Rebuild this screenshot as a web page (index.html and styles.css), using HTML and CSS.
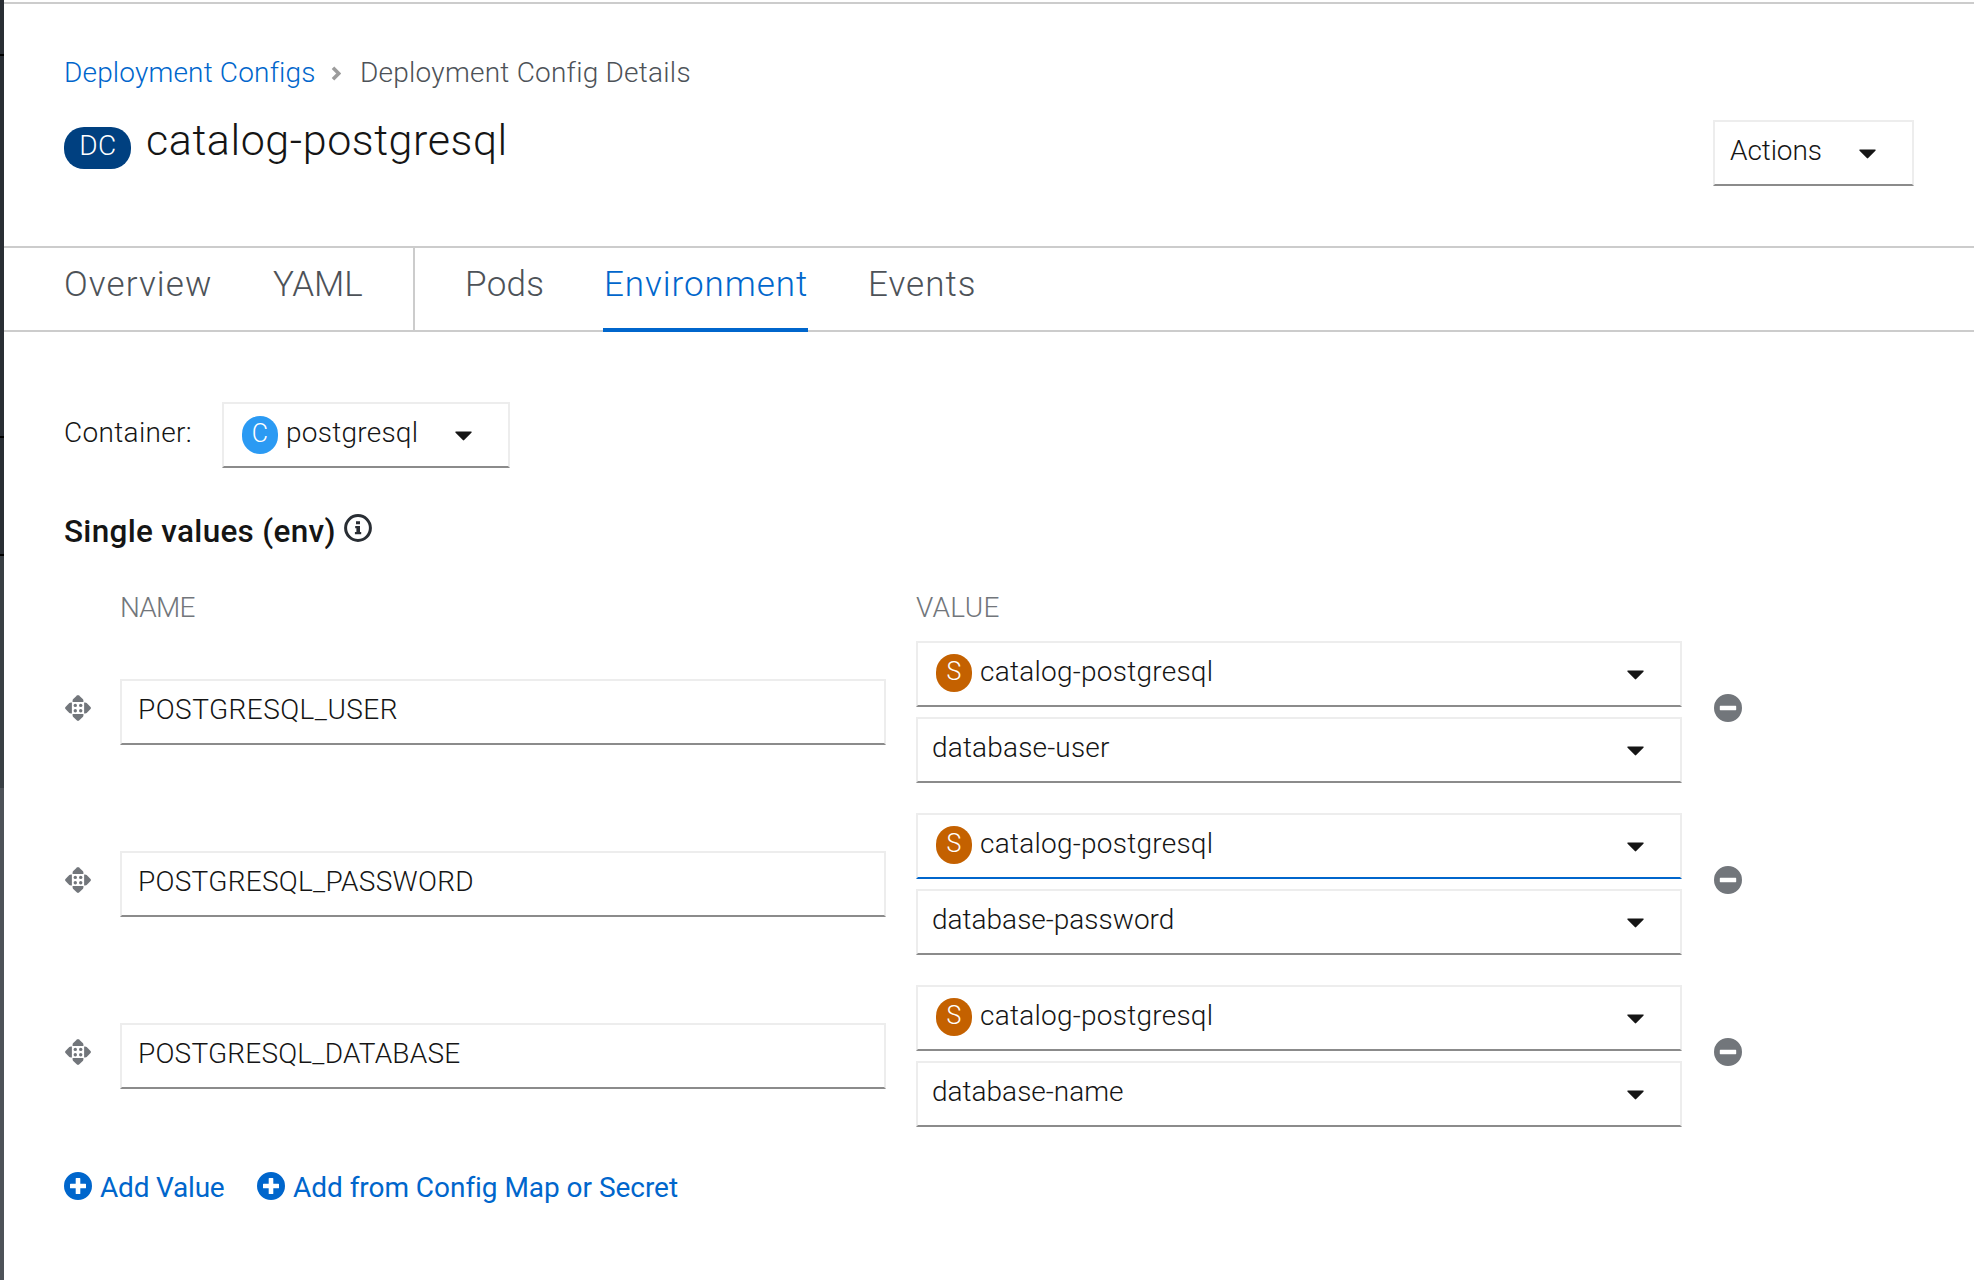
FILE: index.html
```
<!DOCTYPE html>
<html lang="en">
<head>
<meta charset="utf-8">
<title>catalog-postgresql</title>
<link rel="stylesheet" href="styles.css">
</head>
<body>
<svg width="0" height="0" class="defs" aria-hidden="true">
  <symbol id="caret" viewBox="0 0 17 10"><path d="M.6.4H16.4Q17 1 16.4 1.7L9.2 9.1Q8.5 9.8 7.8 9.1L.6 1.7Q0 1 .6.4Z"/></symbol>
  <symbol id="move" viewBox="0 0 26 26">
    <path d="M12 .5Q13 -.4 14 .5L18 4.3Q18.6 5 18.4 6.9H7.6Q7.4 5 8 4.3Z"/>
    <path d="M12 .5Q13 -.4 14 .5L18 4.3Q18.6 5 18.4 6.9H7.6Q7.4 5 8 4.3Z" transform="rotate(90 13 13)"/>
    <path d="M12 .5Q13 -.4 14 .5L18 4.3Q18.6 5 18.4 6.9H7.6Q7.4 5 8 4.3Z" transform="rotate(180 13 13)"/>
    <path d="M12 .5Q13 -.4 14 .5L18 4.3Q18.6 5 18.4 6.9H7.6Q7.4 5 8 4.3Z" transform="rotate(270 13 13)"/>
    <circle cx="10.3" cy="10.4" r="1.7"/><circle cx="15.7" cy="10.4" r="1.7"/>
    <circle cx="10.3" cy="15.7" r="1.7"/><circle cx="15.7" cy="15.7" r="1.7"/>
  </symbol>
  <symbol id="minus" viewBox="0 0 28 28"><path fill-rule="evenodd" d="M14 0a14 14 0 1 0 0 28a14 14 0 1 0 0-28ZM6.4 11.8H21.6Q22.2 11.8 22.2 12.4V15.6Q22.2 16.2 21.6 16.2H6.4Q5.8 16.2 5.8 15.6V12.4Q5.8 11.8 6.4 11.8Z"/></symbol>
  <symbol id="plus" viewBox="0 0 28 28"><path fill-rule="evenodd" d="M14 0a14 14 0 1 0 0 28a14 14 0 1 0 0-28ZM12.3 6H15.7Q16.3 6 16.3 6.6V11.7H21.4Q22 11.7 22 12.3V15.7Q22 16.3 21.4 16.3H16.3V21.4Q16.3 22 15.7 22H12.3Q11.7 22 11.7 21.4V16.3H6.6Q6 16.3 6 15.7V12.3Q6 11.7 6.6 11.7H11.7V6.6Q11.7 6 12.3 6Z"/></symbol>
  <symbol id="info" viewBox="0 0 28 28"><circle cx="14" cy="14" r="12.4" fill="none" stroke="currentColor" stroke-width="3"/><path d="M12 7.2H16V10.2H12ZM11.2 12H16V18H17.2V20.2H10.9V18H12.4V14.2H11.2Z"/></symbol>
</svg>
<div class="app">
  <aside class="sidebar"><div class="nav-a"></div><div class="nav-b"></div><div class="nav-c"></div><div class="nav-d"></div><div class="nav-e"></div></aside>
  <main class="main">
    <header class="header">
      <nav class="breadcrumb">
        <a class="crumb-link">Deployment Configs</a>
        <svg class="chevron" viewBox="0 0 10 15"><path d="M2 1.8L7.7 7.5L2 13.2" fill="none" stroke="#9c9c9c" stroke-width="3.6"/></svg>
        <span class="crumb">Deployment Config Details</span>
      </nav>
      <div class="title-row">
        <span class="badge badge-dc">DC</span>
        <h1 class="title">catalog-postgresql</h1>
        <button class="field actions"><span class="actions-text">Actions</span><svg class="caret"><use href="#caret"/></svg></button>
      </div>
    </header>
    <nav class="tabs">
      <a class="tab overview">Overview</a>
      <a class="tab yaml">YAML</a>
      <a class="tab pods">Pods</a>
      <a class="tab environment">Environment</a>
      <a class="tab events">Events</a>
    </nav>
    <section class="content">
      <div class="container-row">
        <span class="container-label">Container:</span>
        <button class="field container-select"><span class="badge badge-c">C</span><span class="name">postgresql</span><svg class="caret"><use href="#caret"/></svg></button>
      </div>
      <h2 class="heading">Single values (env)<svg class="info"><use href="#info"/></svg></h2>
      <div class="columns"><span class="col-name">NAME</span><span class="col-value">VALUE</span></div>
      <div class="rows">
        <div class="row">
          <svg class="move"><use href="#move"/></svg>
          <div class="field input input-user">POSTGRESQL_USER</div>
          <div class="pair">
            <button class="field select"><span class="badge badge-s">S</span><span class="name">catalog-postgresql</span><svg class="caret"><use href="#caret"/></svg></button>
            <button class="field select"><span class="key key-user">database-user</span><svg class="caret"><use href="#caret"/></svg></button>
          </div>
          <svg class="minus"><use href="#minus"/></svg>
        </div>
        <div class="row">
          <svg class="move"><use href="#move"/></svg>
          <div class="field input input-password">POSTGRESQL_PASSWORD</div>
          <div class="pair">
            <button class="field select focused"><span class="badge badge-s">S</span><span class="name">catalog-postgresql</span><svg class="caret"><use href="#caret"/></svg></button>
            <button class="field select"><span class="key">database-password</span><svg class="caret"><use href="#caret"/></svg></button>
          </div>
          <svg class="minus"><use href="#minus"/></svg>
        </div>
        <div class="row">
          <svg class="move"><use href="#move"/></svg>
          <div class="field input input-database">POSTGRESQL_DATABASE</div>
          <div class="pair">
            <button class="field select"><span class="badge badge-s">S</span><span class="name">catalog-postgresql</span><svg class="caret"><use href="#caret"/></svg></button>
            <button class="field select"><span class="key">database-name</span><svg class="caret"><use href="#caret"/></svg></button>
          </div>
          <svg class="minus"><use href="#minus"/></svg>
        </div>
      </div>
      <div class="add-row">
        <a class="add add-value"><svg class="plus"><use href="#plus"/></svg>Add Value</a>
        <a class="add add-from"><svg class="plus"><use href="#plus"/></svg>Add from Config Map or Secret</a>
      </div>
    </section>
  </main>
</div>
</body>
</html>
```
FILE: styles.css
```
* { box-sizing: border-box; }
body { margin: 0; background: #fff; color: #151515; font: 300 28px/34px Roboto, sans-serif; }
.defs { display: block; }
svg { display: block; flex: none; fill: currentColor; }
.app { display: flex; height: 1280px; overflow: hidden; }

.sidebar { width: 4px; flex: none; display: flex; flex-direction: column; background: #292e34; }
.nav-a { height: 56px; border-bottom: 2px solid #000; }
.nav-b { height: 382px; border-bottom: 2px solid #000; }
.nav-c { height: 118px; border-bottom: 2px solid #000; }
.nav-d { height: 232px; background: #393f44; }
.nav-e { flex: 1; background: #4d5258; }

.main { flex: 1; margin-top: 2px; border-top: 2px solid #ccc; white-space: nowrap; }
.header { height: 242px; padding: 52px 60px 0; }
.breadcrumb { display: flex; }
.crumb-link { color: #06c; width: 267px; letter-spacing: .17px; }
.chevron { width: 10px; height: 15px; margin: 10px 19px 0 0; }
.crumb { color: #4d5258; letter-spacing: .24px; }
.title-row { display: flex; align-items: flex-start; margin-top: 25px; }
.title { margin: 0 0 0 15px; font-size: 43px; font-weight: 300; line-height: 50px; letter-spacing: .58px; }

.badge { flex: none; color: #fff; text-align: center; border-radius: 20px; }
.badge-dc { width: 67px; height: 42px; margin-top: 12px; padding-left: 1px; line-height: 37px; letter-spacing: .5px; background: #004080; }
.badge-c, .badge-s { width: 36px; height: 38px; margin: 12px 8px 0 18px; font-size: 25px; line-height: 35px; }
.badge-c { background: #2b9af3; }
.badge-s { background: #c46100; margin-top: 11px; }

.field { display: flex; align-items: flex-start; height: 66px; margin: 0; padding: 0; background: #fff; color: #151515; border: 2px solid #ededed; border-bottom-color: #8b8b8b; font: inherit; line-height: 57px; text-align: left; letter-spacing: .25px; }
.caret { width: 17px; height: 10px; margin: 27px 0 0 auto; }
.focused { border-bottom-color: #06c; }
.actions { width: 201px; margin: 5px 0 0 auto; padding: 0 36px 0 15px; }
.actions-text { letter-spacing: -.1px; }

.tabs { display: flex; height: 86px; padding-left: 60px; border-top: 2px solid #ccc; border-bottom: 2px solid #ccc; font-size: 35px; line-height: 74px; color: #4d5258; }
.tab { height: 82px; }
.overview { width: 209px; letter-spacing: 1.1px; }
.yaml { width: 142px; border-right: 2px solid #ccc; letter-spacing: -.1px; }
.pods { width: 138px; margin-left: 50px; letter-spacing: .3px; }
.environment { width: 205px; height: 84px; margin-right: 60px; padding-left: 1px; border-bottom: 4px solid #06c; color: #06c; letter-spacing: .94px; }
.events { letter-spacing: 1.02px; }

.content { padding: 70px 60px 0; }
.container-row { display: flex; }
.container-label { width: 158px; line-height: 61px; letter-spacing: .33px; }
.container-select { width: 288px; padding-right: 36px; }
.heading { display: flex; margin: 43px 0 0; font-size: 31.5px; font-weight: 500; line-height: 42px; letter-spacing: .3px; }
.info { width: 28px; height: 28px; margin: 3px 0 0 8px; color: #292e34; }
.columns { display: grid; grid-template-columns: 796px 1fr; margin-top: 38px; padding-left: 56px; color: #72767b; }
.col-name { letter-spacing: -.8px; }
.col-value { letter-spacing: .3px; }
.rows { display: grid; gap: 30px; margin-top: 16px; }
.row { display: grid; grid-template-columns: 56px 766px 30px 766px 32px 28px; align-items: center; }
.move { width: 26px; height: 26px; margin: -8px 0 0 1px; color: #72767b; }
.input { padding-left: 16px; }
.input-user { letter-spacing: .45px; }
.input-password { letter-spacing: .27px; }
.input-database { letter-spacing: .2px; }
.pair { grid-column: 4; display: grid; gap: 10px; }
.select { width: 766px; padding-right: 36px; }
.key { padding-left: 14px; letter-spacing: 0; }
.key-user { letter-spacing: .17px; }
.minus { grid-column: 6; width: 28px; height: 28px; margin-top: -8px; color: #72767b; }
.add-row { display: flex; margin-top: 44px; color: #06c; font-weight: 400; }
.add { display: flex; }
.plus { width: 28px; height: 28px; margin: 1px 8px 0 0; }
.add-value { width: 193px; letter-spacing: -.2px; }
.add-from { letter-spacing: -.04px; }
```
